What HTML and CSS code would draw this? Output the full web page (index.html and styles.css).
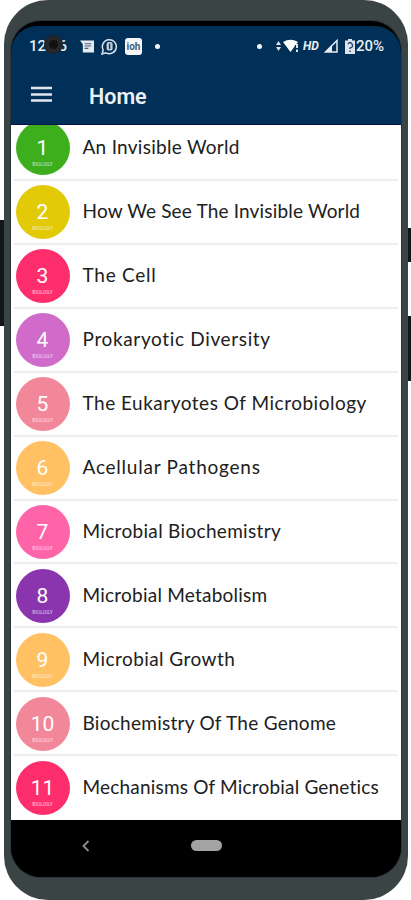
FILE: index.html
```html
<!DOCTYPE html>
<html lang="en">
<head>
    <meta charset="UTF-8">
    <meta name="viewport" content="width=device-width, initial-scale=1.0">
    <title>Home</title>
    <link rel="stylesheet" href="styles.css">
</head>
<body>
    <div class="phone">
        <!-- side buttons -->
        <span class="side-button power"></span>
        <span class="side-button volume-up"></span>
        <span class="side-button volume-down"></span>

        <div class="screen">
            <div class="status-bar">
                <div class="status-left">
                    <span class="clock">12:36<span class="camera"></span></span>
                    <svg class="message-icon" width="14" height="13" viewBox="0 0 15 13"><path d="M0 0h15v13H3V4z" fill="#e6ebf2"/><path d="M5 3.5h7M5 6h7M5 8.5h4" stroke="#45617f" stroke-width="1.1"/></svg>
                    <svg class="chat-icon" width="17" height="17" viewBox="0 0 17 17" fill="none"><path d="M1 16l1.2-4A7 7 0 1 1 5 14.8z" stroke="#d9e1ea" stroke-width="1.5"/><rect x="5.6" y="4" width="6" height="8.500" rx="2" fill="#c4ceda"/><path d="M8.600 5.500v5.500" stroke="#16395f" stroke-width="1.400"/></svg>
                    <span class="app-icon">ioh</span>
                    <span class="dot"></span>
                </div>
                <div class="status-right">
                    <span class="dot"></span>
                    <svg class="wifi-icon" width="24" height="14" viewBox="0 0 24 14"><path d="M0 6l2.500-4L5 6zM0 8h5l-2.500 4z" fill="#dce4ed"/><path d="M7 3Q14.500-1.500 22 3L14.500 13z" fill="#fff"/><path d="M19 6h3v7h-4.500z" fill="#003057"/><path d="M21 5v4M21 10.500v2.500" stroke="#dce4ed" stroke-width="2"/></svg>
                    <span class="hd">HD</span>
                    <svg class="signal-icon" width="14" height="14" viewBox="0 0 14 14"><path d="M1.500 13L13 1.500V13z" fill="none" stroke="#e6ebf2" stroke-width="1.500"/><path d="M1 13l7-7v7z" fill="#e6ebf2"/></svg>
                    <svg class="battery-icon" width="10" height="15" viewBox="0 0 10 15"><path d="M3 0h4v1.500h3V15H0V1.500h3z" fill="#dce4ed"/><path d="M3 5q2-3 4 0t-2 4v1M5 11.500v1.500" fill="none" stroke="#24476a" stroke-width="1.400"/></svg>
                    <span class="percent">20%</span>
                </div>
            </div>

            <header class="toolbar">
                <svg class="menu-icon" width="21" height="16" viewBox="0 0 21 16"><path d="M0 2h21M0 8.500h21M0 14.500h21" stroke="#e3e5f2" stroke-width="2.600"/></svg>
                <h1>Home</h1>
            </header>

            <ul class="chapters">
                <li><span class="badge green"><b>1</b><small>BIOLOGY</small></span><span class="name c1">An Invisible World</span></li>
                <li><span class="badge yellow"><b>2</b><small>BIOLOGY</small></span><span class="name c2">How We See The Invisible World</span></li>
                <li><span class="badge red"><b>3</b><small>BIOLOGY</small></span><span class="name c3">The Cell</span></li>
                <li><span class="badge orchid"><b>4</b><small>BIOLOGY</small></span><span class="name c4">Prokaryotic Diversity</span></li>
                <li><span class="badge salmon"><b>5</b><small>BIOLOGY</small></span><span class="name c5">The Eukaryotes Of Microbiology</span></li>
                <li><span class="badge orange"><b>6</b><small>BIOLOGY</small></span><span class="name c6">Acellular Pathogens</span></li>
                <li><span class="badge pink"><b>7</b><small>BIOLOGY</small></span><span class="name c7">Microbial Biochemistry</span></li>
                <li><span class="badge purple"><b>8</b><small>BIOLOGY</small></span><span class="name c8">Microbial Metabolism</span></li>
                <li><span class="badge orange"><b>9</b><small>BIOLOGY</small></span><span class="name c9">Microbial Growth</span></li>
                <li><span class="badge salmon"><b>10</b><small>BIOLOGY</small></span><span class="name c10">Biochemistry Of The Genome</span></li>
                <li><span class="badge red"><b>11</b><small>BIOLOGY</small></span><span class="name c11">Mechanisms Of Microbial Genetics</span></li>
            </ul>

            <nav class="nav-bar">
                <svg class="back-icon" width="8" height="12" viewBox="0 0 8 12"><path d="M6.500 1L1.500 6l5 5" fill="none" stroke="#8d8d8d" stroke-width="1.800"/></svg>
                <span class="home-pill"></span>
            </nav>
        </div>
    </div>
</body>
</html>
```
FILE: styles.css
```css
* {
    box-sizing: border-box;
}

body {
    margin: 0;
    background: #fff;
    font-family: Roboto, sans-serif;
    overflow: hidden;
}

/* phone body */
.phone {
    position: relative;
    width: 404px;
    height: 900px;
    margin-left: 4px;
    padding: 21px 7px 23px;
    border-radius: 44px;
    background: #3b4444;
}

.side-button {
    position: absolute;
    width: 4px;
    background: #101719;
}

.power {
    left: -4px;
    top: 220px;
    height: 106px;
}

.volume-up {
    right: -4px;
    top: 228px;
    height: 34px;
}

.volume-down {
    right: -4px;
    top: 316px;
    height: 65px;
}

.screen {
    display: flex;
    flex-direction: column;
    height: 856px;
    padding-top: 5px;
    border-radius: 30px;
    background: #000;
    box-shadow: 0 0 0 1px #28353a;
    overflow: hidden;
}

/* status bar */
.status-bar {
    display: flex;
    justify-content: space-between;
    height: 40px;
    padding: 0 17px 0 18px;
    border-radius: 26px 26px 0 0;
    background: #003057;
    color: #e9eef4;
    font-size: 14px;
    font-weight: 500;
}

.status-left,
.status-right {
    display: flex;
    align-items: center;
    height: 40px;
}

.clock {
    position: relative;
    width: 39px;
    font-size: 15px;
}

.camera {
    position: absolute;
    left: 15px;
    top: -2px;
    width: 19px;
    height: 19px;
    border-radius: 50%;
    background: radial-gradient(circle at 50% 50%, #111 0 30%, #292a2b 40%, #1e2225 70%);
}

.message-icon {
    margin-left: 12px;
}

.chat-icon {
    margin-left: 7px;
}

.app-icon {
    width: 17px;
    height: 17px;
    margin-left: 7px;
    border-radius: 3px;
    background: #f4f6f8;
    color: #476079;
    font-size: 10px;
    font-weight: 700;
    line-height: 18px;
    text-align: center;
}

.dot {
    width: 5px;
    height: 5px;
    border-radius: 50%;
    background: #f2f5f8;
}

.status-left .dot {
    margin-left: 13px;
}

.wifi-icon {
    margin-left: 12px;
}

.hd {
    margin-left: 3px;
    font-size: 12px;
    font-style: italic;
    font-weight: 700;
}

.signal-icon {
    margin-left: 5px;
}

.battery-icon {
    margin-left: 7px;
}

.percent {
    margin-left: 1px;
    font-size: 15px;
}

.status-right .dot {
    margin-right: 2px;
}

/* toolbar */
.toolbar {
    display: flex;
    align-items: center;
    height: 59px;
    padding: 0 20px 0;
    border-bottom: 1px solid #06104a;
    background: #003057;
}

.menu-icon {
    margin-bottom: 2px;
}

.toolbar h1 {
    margin: 2px 0 0 37px;
    color: #edf1f6;
    font-size: 21.5px;
    font-weight: 600;
}

/* chapter list */
.chapters {
    height: 695px;
    margin: 0;
    padding: 0 3px;
    background: #fefefe;
    list-style: none;
    overflow: hidden;
}

.chapters li {
    display: flex;
    align-items: center;
    height: 63.93px;
    padding-left: 1.5px;
    border-bottom: 2px solid #eee;
}

.chapters li:first-child {
    margin-top: -8px;
}

.chapters li:last-child {
    border-bottom-color: transparent;
}

.badge {
    display: flex;
    flex-direction: column;
    align-items: center;
    width: 54px;
    height: 54px;
    margin-top: 1px;
    padding-top: 15px;
    border-radius: 50%;
    color: #fff;
}

.badge b {
    font-size: 21px;
    font-weight: 400;
    line-height: 25px;
}

.badge small {
    font-size: 5px;
    line-height: 6px;
    opacity: 0.7;
}

.green { background: #3dae1c; }
.yellow { background: #e2ca07; }
.red { background: #fe2e6d; }
.orchid { background: #d06bca; }
.salmon { background: #f3879a; }
.orange { background: #ffc163; }
.pink { background: #ff64a8; }
.purple { background: #8a35ad; }

.name {
    margin: -2px 0 0 13px;
    color: #202020;
    font-family: Lato, sans-serif;
    font-size: 19px;
    letter-spacing: 0.5px;
    white-space: nowrap;
}

/* tracking per title */
.c1 { letter-spacing: 0.28px; }
.c2 { letter-spacing: 0.17px; }
.c3 { letter-spacing: 0.75px; }
.c4 { letter-spacing: 0.65px; }
.c6 { letter-spacing: 0.77px; }
.c7 { letter-spacing: 0.32px; }
.c8 { letter-spacing: 0.23px; }
.c9 { letter-spacing: 0.44px; }
.c10 { letter-spacing: 0.27px; }
.c11 { letter-spacing: 0.19px; }

/* system navigation */
.nav-bar {
    display: flex;
    align-items: center;
    height: 57px;
    padding: 0 0 6px 71px;
    background: #000;
}

.home-pill {
    width: 31px;
    height: 11px;
    margin-left: 101px;
    border-radius: 6px;
    background: #a3a3a3;
}
```
